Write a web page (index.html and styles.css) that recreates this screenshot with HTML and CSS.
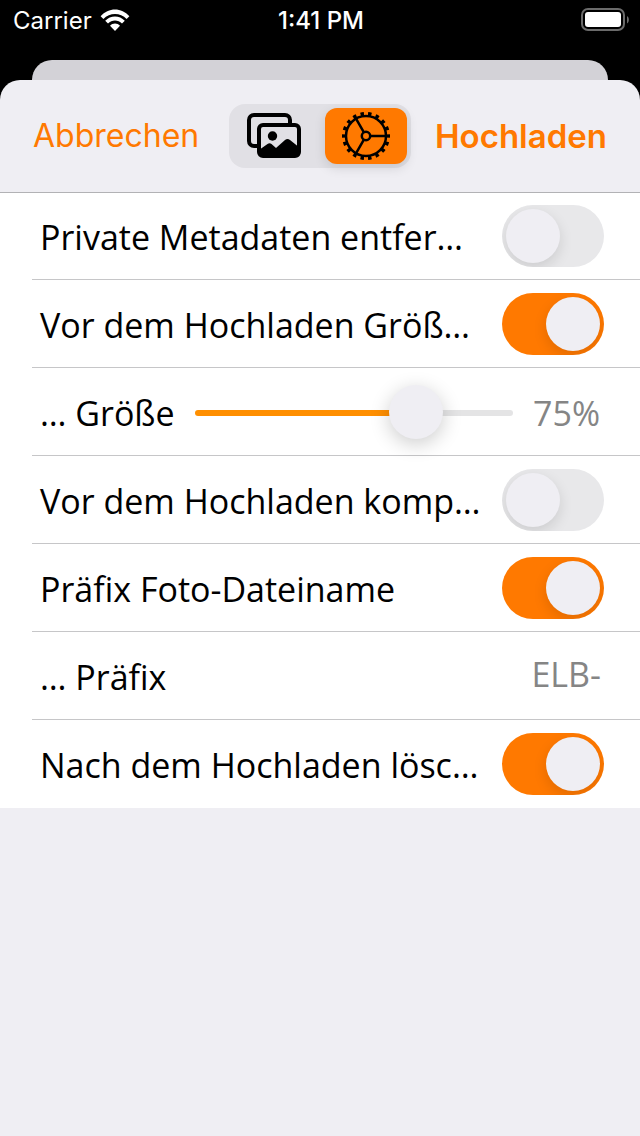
FILE: index.html
```html
<!DOCTYPE html>
<html lang="de">
<head>
<meta charset="utf-8">
<meta name="viewport" content="width=device-width, initial-scale=1">
<title>Hochladen</title>
<link rel="stylesheet" href="styles.css">
</head>
<body>
<div class="status-bar">
  <div class="carrier">
    <span>Carrier</span>
    <svg class="wifi" viewBox="0 0 30 22" aria-hidden="true">
      <path d="M.6 7.2C8.5-1.8 21.500-1.800 29.400 7.200L26.600 10C20.300 3.200 9.700 3.200 3.400 10Z"/>
      <path d="M5.200 11.800C10.500 5.900 19.500 5.900 24.800 11.800L22 14.600C18.200 10.400 11.800 10.400 8 14.600Z"/>
      <path d="M10 16.700C12.700 13.700 17.300 13.700 20 16.700L15 22Z"/>
    </svg>
  </div>
  <div class="clock">1:41 PM</div>
  <svg class="battery" viewBox="0 0 48 24" aria-hidden="true">
    <rect class="battery-case" x="1" y="1" width="42" height="21" rx="6"/>
    <rect class="battery-level" x="4" y="4" width="36" height="15" rx="3"/>
    <path class="battery-tip" d="M46 8c2.500 1.500 2.500 6 0 7.500z"/>
  </svg>
</div>
<div class="sheet-behind"></div>
<div class="sheet">
  <header class="toolbar">
    <button type="button" class="action">Abbrechen</button>
    <div class="segments">
      <button type="button" class="segment" aria-label="Fotos">
        <svg class="photos" viewBox="0 0 56 48" aria-hidden="true">
          <path class="frame" d="M11 34H7a5 5 0 0 1-5-5V8a5 5 0 0 1 5-5h31a5 5 0 0 1 5 5v3"/>
          <rect class="frame" x="12" y="13" width="40" height="31" rx="4"/>
          <circle cx="25.500" cy="24" r="4.700"/>
          <path d="M12 38l8.500-6q2-1.500 4 0l4.500 4 9-8q2.500-2 5 0L53 36v5q0 4-4 4H16q-4 0-4-4z"/>
        </svg>
      </button>
      <button type="button" class="segment selected" aria-label="Einstellungen" aria-pressed="true">
        <svg class="gear" viewBox="-25 -25 50 50" aria-hidden="true">
          <circle class="teeth" r="22" pathLength="18"/>
          <circle class="ring" r="20"/>
          <circle class="ring" r="4.200"/>
          <path class="spokes" d="M4.500 0H20M-2.250-3.900L-10-17.300M-2.250 3.900L-10 17.300"/>
        </svg>
      </button>
    </div>
    <button type="button" class="action primary">Hochladen</button>
  </header>
  <main class="settings">
    <div class="row">
      <label for="metadata">Private Metadaten entfer…</label>
      <input class="switch" type="checkbox" id="metadata">
    </div>
    <div class="row">
      <label for="resize">Vor dem Hochladen Größ…</label>
      <input class="switch" type="checkbox" id="resize" checked>
    </div>
    <div class="row">
      <label for="size">… Größe</label>
      <input class="slider" type="range" id="size" min="5" max="100" value="75">
      <output class="value" for="size">75%</output>
    </div>
    <div class="row">
      <label for="compress">Vor dem Hochladen komp…</label>
      <input class="switch" type="checkbox" id="compress">
    </div>
    <div class="row">
      <label for="use-prefix">Präfix Foto-Dateiname</label>
      <input class="switch" type="checkbox" id="use-prefix" checked>
    </div>
    <div class="row">
      <label for="prefix">… Präfix</label>
      <input class="value prefix" type="text" id="prefix" value="ELB-">
    </div>
    <div class="row">
      <label for="delete">Nach dem Hochladen lösc…</label>
      <input class="switch" type="checkbox" id="delete" checked>
    </div>
  </main>
</div>
</body>
</html>
```
FILE: styles.css
```css
* { box-sizing: border-box; }
body {
  margin: 0;
  min-height: 100vh;
  display: flex;
  flex-direction: column;
  background: #000;
  font-family: "Open Sans", "Noto Sans", sans-serif;
}
button { border: 0; margin: 0; padding: 0; background: none; }
.status-bar {
  height: 60px;
  padding: 8px 11px 0 13px;
  display: grid;
  grid-template-columns: 1fr auto 1fr;
  align-items: start;
  color: #fff;
  font: 24px/26px Inter, sans-serif;
}
.carrier { display: flex; gap: 8px; }
.wifi { width: 30px; height: 22px; margin-top: 1px; fill: #fff; }
.clock { font-weight: 500; }
.battery { width: 48px; height: 24px; justify-self: end; }
.battery-case { fill: none; stroke: #6b6b6b; stroke-width: 2; }
.battery-level { fill: #fff; }
.battery-tip { fill: #6b6b6b; }
.sheet-behind {
  height: 20px;
  margin: 0 32px;
  border-radius: 20px 20px 0 0;
  background: #d3d2d7;
}
.sheet {
  flex: 1;
  border-radius: 20px 20px 0 0;
  background: #efeef3;
}
.toolbar {
  position: relative;
  height: 112px;
  padding: 0 33px;
  display: grid;
  grid-template-columns: 1fr auto 1fr;
  align-items: center;
  box-shadow: 0 1px 0 #b2b2b5;
}
.action {
  justify-self: start;
  color: #ff7900;
  font: 32px/42px Inter, sans-serif;
}
.primary {
  justify-self: end;
  font-size: 33px;
  font-weight: 600;
}
.segments {
  width: 182px;
  height: 64px;
  padding: 4px;
  display: flex;
  gap: 8px;
  border-radius: 16px;
  background: #e1e0e5;
}
.segment {
  flex: 1;
  display: flex;
  align-items: center;
  justify-content: center;
  border-radius: 12px;
}
.segment.selected {
  flex: 0 0 82px;
  background: #ff7900;
  box-shadow: 0 4px 12px rgba(0, 0, 0, .12);
}
.photos { width: 56px; height: 48px; }
.frame { fill: none; stroke: #000; stroke-width: 4; }
.gear { width: 50px; height: 50px; fill: none; stroke: #000; }
.teeth { stroke-width: 4; stroke-dasharray: .45 .55; stroke-dashoffset: .225; }
.ring { stroke-width: 2.500; }
.spokes { stroke-width: 2.500; }
.settings { background: #fff; }
.row {
  height: 88px;
  padding: 0 36px 0 8px;
  margin-left: 32px;
  display: flex;
  align-items: center;
  justify-content: space-between;
  gap: 20px;
  border-bottom: 1px solid #c6c6c8;
  font-size: 34px;
  line-height: 46px;
  color: #000;
}
.row:last-child { border-bottom-color: transparent; }
.row label { padding-top: 2px; white-space: nowrap; }
.switch {
  appearance: none;
  flex: none;
  width: 102px;
  height: 62px;
  margin: 0;
  padding: 4px;
  display: flex;
  overflow: hidden;
  border-radius: 31px;
  background: #e8e8ea;
}
.switch::before {
  content: "";
  width: 54px;
  height: 54px;
  border-radius: 50%;
  background: #efeef3;
  box-shadow: 0 5px 14px rgba(0, 0, 0, .12);
}
.switch:checked { justify-content: flex-end; background: #ff7900; }
.slider {
  appearance: none;
  flex: 1;
  min-width: 0;
  height: 56px;
  margin: 2px 0 0;
  background: none;
}
.slider::-webkit-slider-runnable-track {
  height: 6px;
  border-radius: 3px;
  background: linear-gradient(to right, #ff8f00 70%, #e4e4e5 70%);
}
.slider::-webkit-slider-thumb {
  appearance: none;
  width: 54px;
  height: 54px;
  margin-top: -25px;
  border-radius: 50%;
  background: #efeef3;
  box-shadow: 0 5px 20px rgba(0, 0, 0, .2);
}
.value { padding: 2px 4px 0 0; color: #858585; }
.prefix {
  width: 200px;
  height: 54px;
  padding: 0 3px 4px 0;
  border: 0;
  background: none;
  font: inherit;
  text-align: right;
}
```
